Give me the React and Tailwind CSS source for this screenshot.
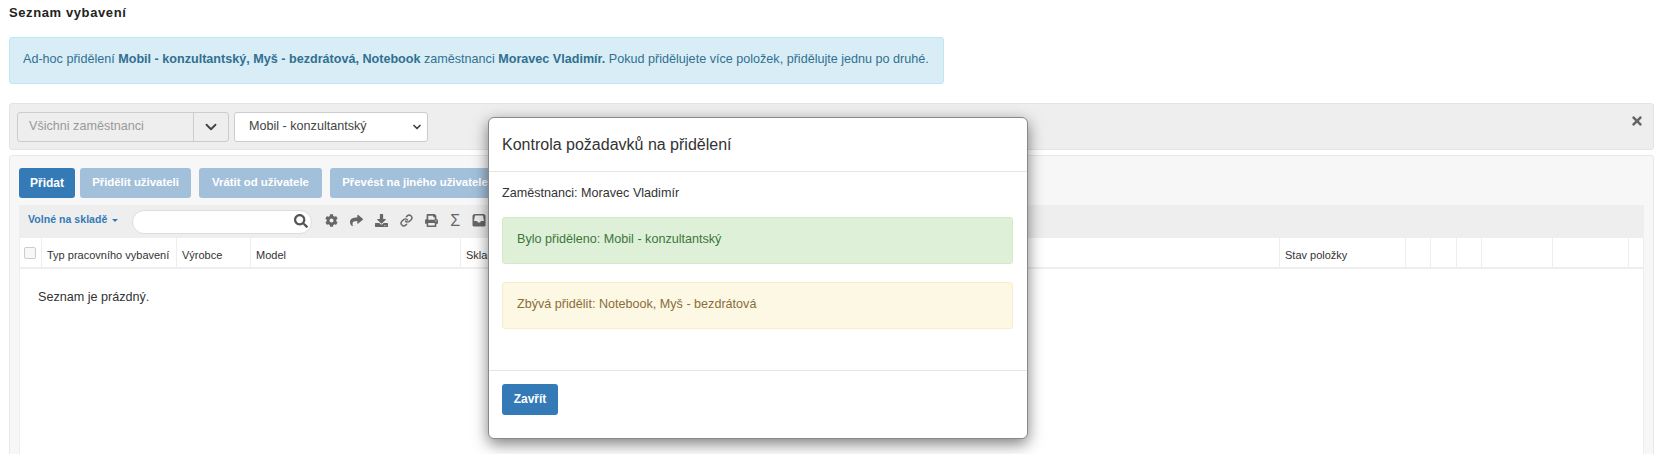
import { ChevronDown, Link } from 'lucide-react';
import { FaCog, FaShare, FaDownload, FaPrint, FaTimes, FaSearch } from 'react-icons/fa';

const columns = [
    ['w-[135px]', 'Typ pracovního vybavení'],
    ['w-[74px]', 'Výrobce'],
    ['w-[210px]', 'Model'],
    ['w-[819px]', 'Sklad'],
    ['w-[126px]', 'Stav položky'],
    ['w-[25px]', ''],
    ['w-[26px]', ''],
    ['w-[25px]', ''],
    ['w-[71px]', ''],
    ['w-[76px]', ''],
];

const DisabledBtn = ({ children, className }) => (
    <button className={`h-[30px] rounded-[3px] bg-[#a3c0db] text-white font-bold text-[11.4px] whitespace-nowrap ${className}`}>{children}</button>
);

const Modal = () => (
    <div className="absolute left-[488px] top-[117px] w-[540px] h-[322px] bg-white rounded-[6px] border border-[#888] shadow-[0_5px_15px_rgba(0,0,0,0.5)] flex flex-col text-[#333]">
        <div className="h-[54px] shrink-0 border-b border-[#e5e5e5] flex items-center px-[13px] text-[16px]">Kontrola požadavků na přidělení</div>
        <div className="flex-1 pl-[13px] pr-[14px] pt-[13px]">
            <div className="leading-[17px] mb-[15px]">Zaměstnanci: Moravec Vladimír</div>
            <div className="h-[47px] mb-[18px] bg-[#dff0d8] border border-[#d6e9c6] rounded-[3px] text-[#3c763d] flex items-center px-[14px] pb-[2px]">Bylo přiděleno: Mobil - konzultantský</div>
            <div className="h-[47px] bg-[#fcf8e3] border border-[#faebcc] rounded-[3px] text-[#8a6d3b] flex items-center px-[14px] pb-[2px]">Zbývá přidělit: Notebook, Myš - bezdrátová</div>
        </div>
        <div className="h-[68px] shrink-0 border-t border-[#e5e5e5] px-[13px] pt-[13px]">
            <button className="h-[31px] w-[56px] rounded-[3px] bg-[#337ab7] text-white font-bold text-[12px] pb-[2px]">Zavřít</button>
        </div>
    </div>
);

export default function App() {
    return (
        <div className="relative h-[454px] overflow-hidden bg-white font-['Liberation_Sans',Arial,sans-serif] text-[12.6px] text-[#333]">
            <div className="px-[9px]">
                <h1 className="h-[37px] pt-[4px] font-bold text-[13px] leading-[17px] tracking-[0.6px] text-[#222]">Seznam vybavení</h1>
                <div className="w-[935px] h-[47px] bg-[#d9edf7] border border-[#bce8f1] rounded-[3px] text-[#31708f] flex items-center px-[13px] pb-[3px]">
                    <span>Ad-hoc přidělení <b>Mobil - konzultantský, Myš - bezdrátová, Notebook</b> zaměstnanci <b>Moravec Vladimír.</b> Pokud přidělujete více položek, přidělujte jednu po druhé.</span>
                </div>

                <div className="mt-[19px] h-[47px] w-[1645px] bg-[#eee] border border-[#e3e3e3] rounded-[3px] flex items-center px-[7px] gap-[5px] relative">
                    <div className="flex h-[30px] w-[212px] border border-[#ccc] rounded-[3px] bg-[#eee] text-[#999]">
                        <div className="w-[176px] flex items-center px-[11px] border-r border-[#ccc]">Všichni zaměstnanci</div>
                        <div className="flex-1 flex items-center justify-center"><ChevronDown size={18} strokeWidth={2.5} className="text-[#444]" /></div>
                    </div>
                    <div className="h-[30px] w-[194px] border border-[#ccc] rounded-[3px] bg-white flex items-center pl-[14px] pr-[4px] justify-between text-[#444]">
                        <span>Mobil - konzultantský</span>
                        <ChevronDown size={12} strokeWidth={3.5} className="text-[#444]" />
                    </div>
                    <FaTimes size={14} className="absolute right-[9px] top-[10px] text-[#666]" />
                </div>

                <div className="mt-[5px] h-[320px] w-[1645px] bg-[#f7f7f7] border border-[#e8e8e8] rounded-[3px] px-[9px] pt-[12px]">
                    <div className="flex">
                        <button className="h-[30px] w-[56px] rounded-[3px] bg-[#337ab7] text-white font-bold text-[12px] mr-[5px]">Přidat</button>
                        <DisabledBtn className="w-[111px] mr-[8px]">Přidělit uživateli</DisabledBtn>
                        <DisabledBtn className="w-[123px] mr-[8px]">Vrátit od uživatele</DisabledBtn>
                        <DisabledBtn className="w-[170px]">Převést na jiného uživatele</DisabledBtn>
                    </div>
                    <div className="mt-[7px] w-[1625px] h-[33px] bg-[#eee] flex items-center pl-[9px]">
                        <span className="text-[#337ab7] font-bold text-[10.5px] tracking-[0.05px] flex items-center gap-[5px] pb-[3px]">
                            Volné na skladě
                            <span className="w-0 h-0 border-x-[3px] border-x-transparent border-t-[3px] border-t-[#337ab7]" />
                        </span>
                        <div className="ml-[14px] w-[180px] h-[24px] bg-white border border-[#ddd] rounded-full flex items-center justify-end pr-[3px] pb-[1px]">
                            <FaSearch size={14} className="text-[#555]" />
                        </div>
                        <div className="ml-[13px] flex items-center gap-[12px] text-[#666] pb-[3px]">
                            <FaCog size={13} className="shrink-0" />
                            <FaShare size={13} className="shrink-0" />
                            <FaDownload size={13} className="shrink-0" />
                            <Link size={13} strokeWidth={2.6} className="shrink-0" />
                            <FaPrint size={13} className="shrink-0" />
                            <span className="text-[16px] leading-none w-[10px] pt-[2px]">Σ</span>
                            <svg viewBox="0 0 14 14" width="14" height="14" className="fill-[#666] shrink-0"><path d="M2 1h10l1.500 1.500v10l-1 1h-11l-1-1v-10zM3 2.500L2 8h3l1 1.500h2L9 8h3l-1-5.500z" /></svg>
                        </div>
                    </div>
                    <div className="bg-white border-x border-[#eee] w-[1625px] h-[240px]">
                        <div className="flex h-[31px] border-b-[2px] border-[#eee]">
                            <div className="w-[22px] border-r border-[#eee] shrink-0 pt-[9px] pl-[4px]">
                                <div className="w-[12px] h-[12px] border border-[#ccc] rounded-[2px] bg-[#f7f7f7]" />
                            </div>
                            {columns.map(([width, label], i) => (
                                <div key={i} className={`${width} shrink-0 border-r border-[#eee] pl-[5px] pt-[10px] text-[11px] leading-[14px] text-[#333] whitespace-nowrap`}>{label}</div>
                            ))}
                        </div>
                        <div className="pl-[18px] pt-[20px] leading-[17px]">Seznam je prázdný.</div>
                    </div>
                </div>
            </div>
            <Modal />
        </div>
    );
}
